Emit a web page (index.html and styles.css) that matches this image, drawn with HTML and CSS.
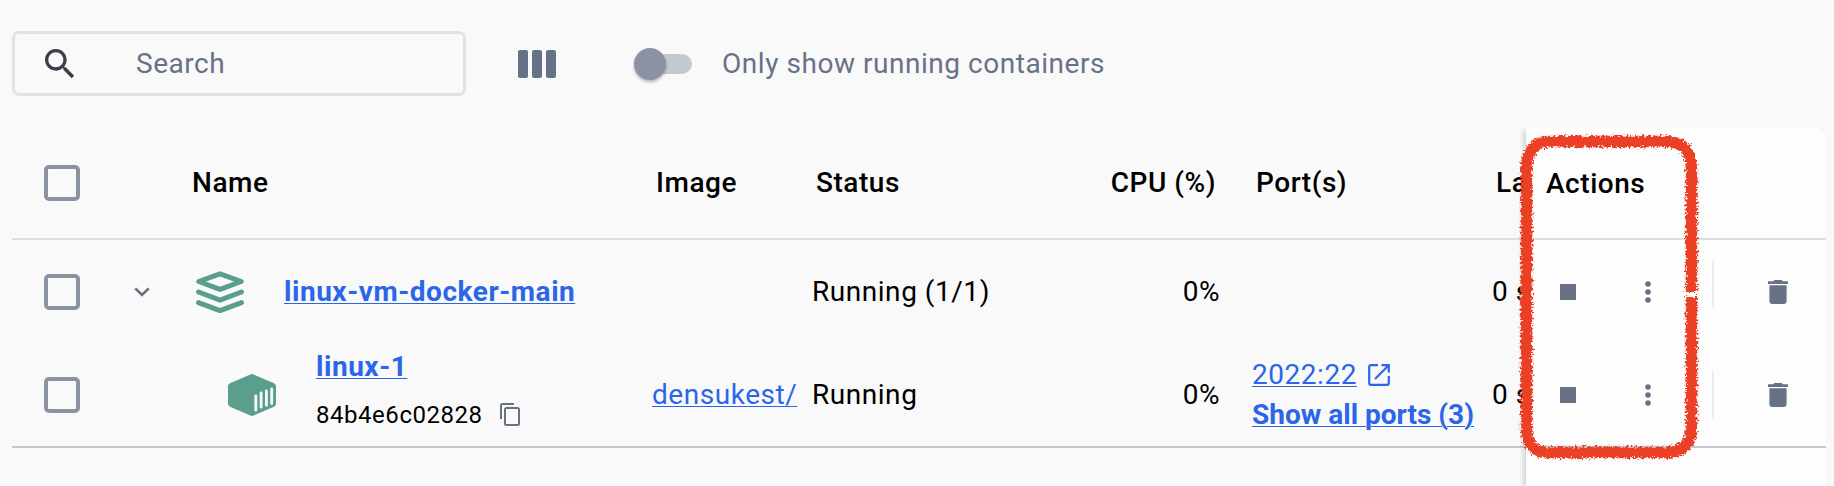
FILE: index.html
```html
<!DOCTYPE html>
<html lang="en">
<head>
<meta charset="utf-8">
<title>Containers</title>
<link rel="stylesheet" href="styles.css">
</head>
<body>
<svg width="0" height="0" class="defs">
  <symbol id="trash" viewBox="0 0 20 24"><path d="M0 1.3h5.2L6.3 0h7.4l1.1 1.3H20V4H0zM1.4 5.3h17.2V21a3 3 0 0 1-3 3H4.4a3 3 0 0 1-3-3z" fill="#677285"/></symbol>
  <symbol id="dots" viewBox="0 0 6 22"><g fill="#677285"><circle cx="3" cy="3" r="2.8"/><circle cx="3" cy="11" r="2.8"/><circle cx="3" cy="19" r="2.8"/></g></symbol>
</svg>
<header class="toolbar">
  <div class="search">
    <svg class="search-icon" viewBox="0 0 24 24"><path fill="#393f49" d="M15.5 14h-.79l-.28-.27C15.41 12.59 16 11.11 16 9.5 16 5.91 13.09 3 9.5 3S3 5.91 3 9.5 5.91 16 9.5 16c1.61 0 3.09-.59 4.23-1.57l.27.28v.79l5 4.99L20.49 19l-4.99-5zm-6 0C7.01 14 5 11.99 5 9.5S7.01 5 9.5 5 14 7.01 14 9.5 11.99 14 9.5 14z"/></svg>
    <span class="placeholder">Search</span>
  </div>
  <div class="columns"><i></i><i></i><i></i></div>
  <div class="switch"><i class="thumb"></i></div>
  <span class="switch-label">Only show running containers</span>
</header>
<main class="table">
  <div class="row head">
    <div class="check"><i class="box"></i></div><div></div>
    <div class="h-name">Name</div><div class="h-image">Image</div><div class="h-status">Status</div>
    <div class="num h-cpu">CPU (%)</div><div class="h-ports">Port(s)</div><div class="h-last">La</div>
  </div>
  <div class="row group">
    <div class="check"><i class="box"></i></div>
    <div class="chevron"><svg width="18" height="12" viewBox="0 0 18 12"><path d="M2.3 2.3 9 9l6.700-6.700" fill="none" stroke="#677285" stroke-width="2.600"/></svg></div>
    <div class="name">
      <svg class="stack" width="48" height="42" viewBox="0 0 48 42"><g fill="none" stroke="#5a9f8e" stroke-width="5" stroke-linecap="round" stroke-linejoin="round"><path d="M24 2.800 45.200 10.500 24 18.400 2.800 10.500z"/><path d="M2.500 21 24 29.100 45.500 21M2.500 31.700 24 39.700 45.500 31.700"/></g></svg>
      <a class="strong">linux-vm-docker-main</a>
    </div>
    <div></div><div class="status">Running (1/1)</div><div class="num">0%</div><div></div><div>0 s</div>
  </div>
  <div class="row child">
    <div class="check"><i class="box"></i></div><div></div>
    <div class="name nested">
      <svg class="cube" width="48" height="42" viewBox="0 0 48 42"><path fill="#5a9f8e" d="M22.300.5Q24-.3 25.700.5L46 9.200Q48 10.200 48 12.300V29.700Q48 31.800 46 32.800L25.700 41.500Q24 42.300 22.300 41.500L2 32.800Q0 31.800 0 29.700V12.300Q0 10.200 2 9.200z"/><path d="M27.800 22V36.200M33.100 19V33.200M38.400 17V31.200M43.700 15V29.500" stroke="#f9f9f9" stroke-width="2.800" stroke-linecap="round"/></svg>
      <div class="ident">
        <a class="strong">linux-1</a>
        <div class="hash"><span>84b4e6c02828</span><svg width="20" height="23" viewBox="0 0 20 23"><path d="M1 16V2.500Q1 1 2.500 1H14" fill="none" stroke="#677285" stroke-width="2"/><rect x="5" y="5" width="14" height="17" rx="1.500" fill="none" stroke="#677285" stroke-width="2"/></svg></div>
      </div>
    </div>
    <div><a>densukest/</a></div><div class="status">Running</div><div class="num">0%</div>
    <div class="ports">
      <div class="port"><a>2022:22</a><svg width="22" height="22" viewBox="0 0 22 22"><path d="M10 1.200H3Q1.200 1.200 1.200 3V19Q1.200 20.800 3 20.800H19Q20.800 20.800 20.800 19V12M13.500 1.200H20.800V8.500M20.500 1.500 7 15" fill="none" stroke="#2b66e9" stroke-width="2.200"/></svg></div>
      <a class="strong all">Show all ports (3)</a>
    </div>
    <div>0 s</div>
  </div>
  <aside class="actions">
    <div class="a-head">Actions</div>
    <div class="a-row"><i class="stop"></i><svg class="dots"><use href="#dots"/></svg><i class="divider"></i><svg class="trash"><use href="#trash"/></svg></div>
    <div class="a-row last"><i class="stop"></i><svg class="dots"><use href="#dots"/></svg><i class="divider"></i><svg class="trash"><use href="#trash"/></svg></div>
  </aside>
</main>
<svg class="marker" width="190" height="340" viewBox="1514 128 190 340">
  <defs><filter id="crayon" x="-5%" y="-5%" width="110%" height="110%">
    <feTurbulence type="fractalNoise" baseFrequency=".45" numOctaves="2" seed="7" result="n"/>
    <feDisplacementMap in="SourceGraphic" in2="n" scale="8" xChannelSelector="R" yChannelSelector="G"/>
    <feGaussianBlur stdDeviation=".45"/>
  </filter></defs>
  <g filter="url(#crayon)" fill="none" stroke="#ec4025">
    <path stroke-width="11.500" d="M1691.500 292V169Q1691 141.500 1666 141.500H1550Q1526.500 142 1526.500 169V430Q1528 452.500 1549 452.500H1668Q1691.500 451 1691.500 426V297"/>
  </g>
</svg>
</body>
</html>
```
FILE: styles.css
```css
* { box-sizing: border-box; }
body {
  margin: 0;
  height: 486px;
  overflow: hidden;
  position: relative;
  background: #f9f9f9;
  color: #000;
  font: 400 28px/32px Roboto, sans-serif;
  letter-spacing: .54px;
}
i { display: block; }
svg { display: block; flex: none; }
.defs { position: absolute; }

.toolbar { display: flex; align-items: center; height: 128px; padding: 0 0 0 12px; color: #677285; }
.search {
  display: flex;
  align-items: center;
  width: 454px;
  height: 65px;
  margin-top: -1px;
  padding-left: 25px;
  border: 3px solid #e1e2e6;
  border-radius: 7px;
}
.search-icon { width: 40px; height: 40px; }
.placeholder { margin-left: 56px; }
.columns { display: flex; gap: 4px; margin-left: 52px; }
.columns i { width: 10px; height: 28px; border-radius: 2px; background: #677285; }
.switch { width: 56px; height: 20px; margin-left: 80px; border-radius: 10px; background: #c4c8d1; }
.thumb {
  width: 32px;
  height: 32px;
  margin: -6px 0 0 -2px;
  border-radius: 50%;
  background: #8b93a3;
  box-shadow: 0 2px 3px rgba(0, 0, 0, .28);
}
.switch-label { margin-left: 30px; }

.table { position: relative; margin: 0 8px 0 12px; height: 358px; }
.row { display: grid; grid-template-columns: 122px 59px 459px 161px 207px 200px 272px 34px; align-items: center; white-space: nowrap; }
.head { height: 112px; border-bottom: 2px solid #dedede; font-weight: 500; }
.group { height: 104px; }
.child { height: 104px; border-bottom: 2px solid #c4c8d1; }
.check { padding-left: 32px; }
.box { width: 36px; height: 36px; border: 4px solid #8b93a3; border-radius: 5px; }
.chevron { margin-left: -1px; }
.num { text-align: right; }
.h-name { margin-left: -1px; }
.h-image { padding-left: 4px; }
.h-status { padding-left: 3px; }
.h-cpu { padding-right: 4px; }
.h-ports { padding-left: 36px; }
.h-last { padding-left: 4px; }
.status { margin-left: -1px; }
.name { display: flex; align-items: center; padding-left: 3px; }
.stack { margin-right: 40px; }
.nested { padding-left: 35px; }
.cube { margin-right: 40px; }
.ident { margin-top: -9px; }
.hash { display: flex; align-items: center; gap: 17px; margin-top: 16px; font-size: 24px; }
a { color: #2b66e9; text-decoration: underline; text-decoration-thickness: 1px; text-underline-offset: 2px; }
.strong { font-weight: 700; }
.all { letter-spacing: 0; }
.ports { padding-left: 32px; line-height: 40px; }
.port { display: flex; align-items: center; gap: 11px; }

.actions {
  position: absolute;
  top: 0;
  right: 0;
  width: 300px;
  height: 358px;
  background: #fdfdfd;
  border-top-right-radius: 10px;
  box-shadow: -2px 2px 6px rgba(0, 0, 0, .18);
  clip-path: inset(0 0 0 -12px);
}
.a-head { height: 112px; padding: 40px 0 0 20px; border-bottom: 2px solid #dedede; font-weight: 500; }
.a-row { display: flex; align-items: center; height: 104px; padding-left: 34px; }
.last { border-bottom: 2px solid #c4c8d1; }
.stop { width: 16px; height: 16px; background: #677285; }
.dots { width: 6px; height: 22px; margin-left: 69px; }
.divider { width: 2px; height: 48px; margin: -16px 0 0 61px; background: #ececec; }
.last .divider { margin-top: 0; }
.trash { width: 20px; height: 24px; margin-left: 54px; }
.marker { position: absolute; left: 1514px; top: 128px; }
```
